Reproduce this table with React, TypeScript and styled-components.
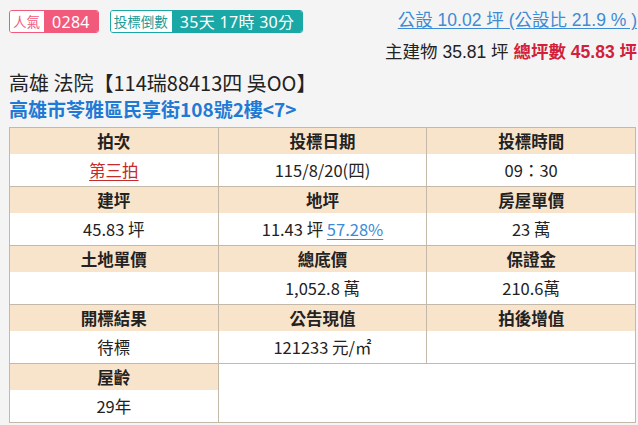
import React from "react";
import styled, { createGlobalStyle } from "styled-components";

const Global = createGlobalStyle`
  html, body { margin: 0; padding: 0; background: #f4f4f4; overflow: hidden; }
  body { font-family: "Noto Sans CJK TC", "Noto Sans", sans-serif; color: #222; }
`;

const Page = styled.div`
  width: 638px;
  height: 425px;
  overflow: hidden;
  padding: 0 0 0 9px;
  box-sizing: border-box;
`;

const Top = styled.div`
  display: flex;
  justify-content: space-between;
  align-items: flex-start;
  width: 628px;
`;

const Badges = styled.div`
  display: flex;
  gap: 11px;
  margin-top: 10px;
`;

const Badge = styled.div<{ $c: string }>`
  display: flex;
  height: 23px;
  border: 1px solid ${(p) => p.$c};
  border-radius: 3px;
  overflow: hidden;
  box-sizing: border-box;
`;

const BadgeLabel = styled.span<{ $c: string }>`
  display: flex;
  align-items: center;
  padding: 0 4px 0 3px;
  background: #fff;
  color: ${(p) => p.$c};
  font-size: 13.5px;
  line-height: 1;
`;

const BadgeValue = styled.span<{ $c: string }>`
  display: flex;
  align-items: center;
  padding: 0 8px 0 8px;
  background: ${(p) => p.$c};
  color: #fff;
  font-family: "Noto Sans", "Noto Sans CJK TC", sans-serif;
  font-size: 16px;
  letter-spacing: 0.3px;
  line-height: 1;
`;

const Area = styled.div`
  text-align: right;
  white-space: nowrap;
  font-family: "Liberation Sans", "Noto Sans CJK TC", sans-serif;
  font-size: 17.5px;
`;

const AreaLink = styled.a`
  display: inline-block;
  margin-top: 9px;
  color: #3d8bd4;
  line-height: 22px;
  text-decoration: underline;
  text-underline-offset: 2px;
`;

const AreaMain = styled.div`
  margin-top: 10px;
  line-height: 22px;
  color: #222;
`;

const Red = styled.b`
  color: #d21f3c;
`;

const Title = styled.div`
  margin-top: 7px;
  font-size: 20px;
  line-height: 26px;
  color: #222;
  white-space: nowrap;
`;

const Address = styled.div`
  font-size: 19px;
  line-height: 26px;
  font-weight: bold;
  color: #1f7ad6;
  white-space: nowrap;
`;

const Table = styled.table`
  margin-top: 5px;
  width: 627px;
  border-collapse: collapse;
  table-layout: fixed;
  border: 1px solid #c4b9a8;
  font-size: 16.5px;
`;

const Th = styled.td`
  height: 26px;
  padding: 0;
  background: #f8e3cb;
  border-left: 1px solid #c4b9a8;
  border-right: 1px solid #c4b9a8;
  text-align: center;
  font-weight: bold;
  color: #222;
  line-height: 26px;
`;

const Td = styled.td`
  height: 32px;
  padding: 0;
  background: #fff;
  border: 1px solid #c4b9a8;
  border-top: none;
  text-align: center;
  color: #222;
  line-height: 32px;
`;

const RedLink = styled.a`
  color: #c62a2a;
  text-decoration: underline;
  text-underline-offset: 3px;
`;

const BlueLink = styled.a`
  color: #3d8bd4;
  text-decoration: underline;
  text-underline-offset: 3px;
`;

type Cell = React.ReactNode;
const rows: [Cell, Cell, Cell][] = [
  ["拍次", "投標日期", "投標時間"],
  [<RedLink key="r">第三拍</RedLink>, "115/8/20(四)", "09：30"],
  ["建坪", "地坪", "房屋單價"],
  ["45.83 坪", <span key="l">11.43 坪 <BlueLink>57.28%</BlueLink></span>, "23 萬"],
  ["土地單價", "總底價", "保證金"],
  ["", "1,052.8 萬", "210.6萬"],
  ["開標結果", "公告現值", "拍後增值"],
  ["待標", "121233 元/㎡", ""],
];

export default function App() {
  return (
    <Page>
      <Global />
      <Top>
        <Badges>
          <Badge $c="#f25a7c">
            <BadgeLabel $c="#f25a7c">人氣</BadgeLabel>
            <BadgeValue $c="#f25a7c">0284</BadgeValue>
          </Badge>
          <Badge $c="#1aa8a6">
            <BadgeLabel $c="#1a9c9a">投標倒數</BadgeLabel>
            <BadgeValue $c="#1aa8a6">35天 17時 30分</BadgeValue>
          </Badge>
        </Badges>
        <Area>
          <AreaLink>公設 10.02 坪 (公設比 21.9 % )</AreaLink>
          <AreaMain>
            主建物 35.81 坪 <Red>總坪數 45.83 坪</Red>
          </AreaMain>
        </Area>
      </Top>
      <Title>高雄 法院【114瑞88413四 吳OO】</Title>
      <Address>高雄市苓雅區民享街108號2樓&lt;7&gt;</Address>
      <Table>
        <tbody>
          {rows.map((r, i) => (
            <tr key={i}>
              {r.map((c, j) =>
                i % 2 === 0 ? <Th key={j}>{c}</Th> : <Td key={j}>{c}</Td>
              )}
            </tr>
          ))}
          <tr>
            <Th>屋齡</Th>
            <Td colSpan={2} rowSpan={2} />
          </tr>
          <tr>
            <Td>29年</Td>
          </tr>
        </tbody>
      </Table>
    </Page>
  );
}
